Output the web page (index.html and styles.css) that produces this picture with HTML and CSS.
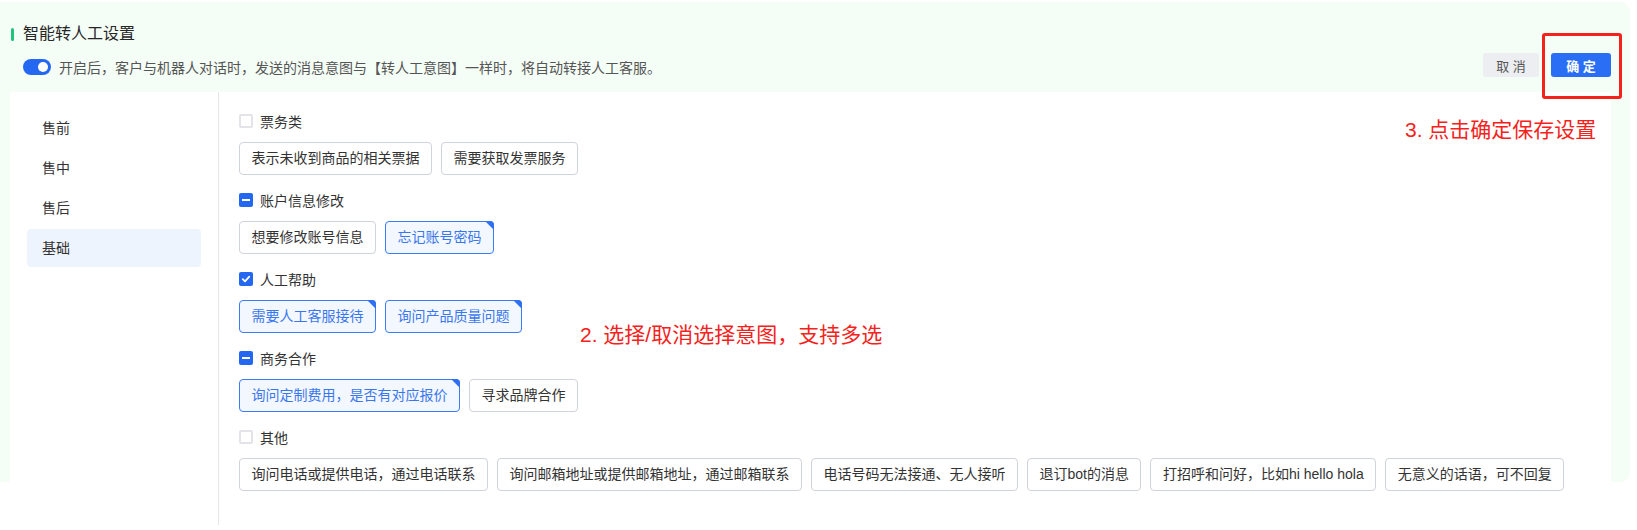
FILE: index.html
```html
<!DOCTYPE html>
<html lang="zh-CN">
<head>
    <meta charset="UTF-8">
    <title>智能转人工设置</title>
    <link rel="stylesheet" href="styles.css">
</head>
<body>
    <div class="page">
        <div class="panel">
            <div class="panel-title">智能转人工设置</div>

            <div class="panel-bar">
                <div class="switch-line">
                    <span class="switch"></span>
                    <span>开启后，客户与机器人对话时，发送的消息意图与【转人工意图】一样时，将自动转接人工客服。</span>
                </div>
                <div class="actions">
                    <button class="btn btn-cancel">取 消</button>
                    <span class="ok-wrap">
                        <button class="btn btn-ok">确 定</button>
                        <span class="mark-box"></span>
                    </span>
                </div>
            </div>

            <div class="card">
                <ul class="side-nav">
                    <li class="side-item">售前</li>
                    <li class="side-item">售中</li>
                    <li class="side-item">售后</li>
                    <li class="side-item active">基础</li>
                </ul>

                <div class="intents">
                    <div class="group">
                        <div class="check"><span class="box"></span>票务类</div>
                        <div class="tags">
                            <span class="tag">表示未收到商品的相关票据</span>
                            <span class="tag">需要获取发票服务</span>
                        </div>
                    </div>

                    <div class="group">
                        <div class="check"><span class="box half"></span>账户信息修改</div>
                        <div class="tags">
                            <span class="tag">想要修改账号信息</span>
                            <span class="tag on">忘记账号密码</span>
                        </div>
                    </div>

                    <div class="group">
                        <div class="check">
                            <span class="box full">
                                <svg width="10" height="10" viewBox="0 0 10 10"><path d="M1.8 5.2 L4 7.3 L8.3 2.6" fill="none" stroke="#fff" stroke-width="1.8" stroke-linecap="round" stroke-linejoin="round"/></svg>
                            </span>人工帮助
                        </div>
                        <div class="tags">
                            <span class="tag on">需要人工客服接待</span>
                            <span class="tag on">询问产品质量问题</span>
                        </div>
                    </div>

                    <div class="group">
                        <div class="check"><span class="box half"></span>商务合作</div>
                        <div class="tags">
                            <span class="tag on">询问定制费用，是否有对应报价</span>
                            <span class="tag">寻求品牌合作</span>
                        </div>
                    </div>

                    <div class="group">
                        <div class="check"><span class="box"></span>其他</div>
                        <div class="tags">
                            <span class="tag">询问电话或提供电话，通过电话联系</span>
                            <span class="tag">询问邮箱地址或提供邮箱地址，通过邮箱联系</span>
                            <span class="tag">电话号码无法接通、无人接听</span>
                            <span class="tag">退订bot的消息</span>
                            <span class="tag">打招呼和问好，比如hi hello hola</span>
                            <span class="tag">无意义的话语，可不回复</span>
                        </div>
                    </div>
                </div>
            </div>
        </div>

        <!-- 说明标注 -->
        <div class="note note-2">2. 选择/取消选择意图，支持多选</div>
        <div class="note note-3">3. 点击确定保存设置</div>
    </div>
</body>
</html>
```

FILE: styles.css
```css
* {
    box-sizing: border-box;
}

body {
    margin: 0;
    font-family: "Liberation Sans", "Noto Sans CJK SC", sans-serif;
    background-color: #fff;
    color: #333;
}

.page {
    position: relative;
    height: 530px;
    overflow: hidden;
}

.panel {
    margin: 2px 7px 0 0;
    height: 480px;
    padding: 0 19px 0 10px;
    background-color: #f4fdf6;
    border-radius: 0 10px 10px 0;
}

.panel-title {
    display: flex;
    align-items: center;
    padding-top: 22px;
    font-size: 16px;
    line-height: 20px;
    color: #262626;
}

.panel-title::before {
    content: "";
    width: 3px;
    height: 13px;
    margin: 0 9px 0 1px;
    background-color: #1fc47d;
    border-radius: 2px;
}

.panel-bar {
    display: flex;
    align-items: center;
    justify-content: space-between;
    height: 24px;
    margin-top: 9px;
}

.switch-line {
    display: flex;
    align-items: center;
    margin-top: 4px;
    padding-left: 13px;
    font-size: 14px;
    color: #555;
}

.switch {
    position: relative;
    width: 28px;
    height: 16px;
    margin-right: 8px;
    background-color: #2468f2;
    border-radius: 8px;
}

.switch::after {
    content: "";
    position: absolute;
    top: 3px;
    right: 3px;
    width: 10px;
    height: 10px;
    background-color: #fff;
    border-radius: 50%;
}

.actions {
    display: flex;
    gap: 12px;
}

.btn {
    height: 24px;
    padding: 0;
    border: none;
    border-radius: 3px;
    font-family: inherit;
    font-size: 13px;
    cursor: pointer;
}

.btn-cancel {
    width: 56px;
    background-color: #eceef1;
    color: #555;
}

.btn-ok {
    width: 60px;
    background-color: #2a6ef5;
    color: #fff;
    font-weight: bold;
}

.ok-wrap {
    position: relative;
    display: flex;
}

.mark-box {
    position: absolute;
    top: -20px;
    left: -9px;
    right: -11px;
    bottom: -22px;
    border: 3px solid #f5221b;
    border-radius: 3px;
}

.card {
    display: flex;
    height: 433px;
    margin-top: 15px;
    background-color: #fff;
}

.side-nav {
    width: 209px;
    margin: 0;
    padding: 17px 17px 0;
    list-style: none;
    border-right: 1px solid #e6e6e6;
}

.side-item {
    height: 38px;
    margin-bottom: 2px;
    padding-left: 15px;
    line-height: 38px;
    font-size: 14px;
    color: #333;
    border-radius: 4px;
}

.side-item.active {
    background-color: #eef4fe;
}

.intents {
    flex: 1;
    padding: 19px 0 0 20px;
}

.group {
    margin-bottom: 15px;
}

.check {
    display: flex;
    align-items: center;
    height: 20px;
    font-size: 14px;
    color: #333;
}

.box {
    display: flex;
    align-items: center;
    justify-content: center;
    width: 14px;
    height: 14px;
    margin-right: 7px;
    border: 2px solid #e3e4e9;
    border-radius: 2px;
}

.box.full,
.box.half {
    border: none;
    background-color: #2468f2;
}

.box.half::after {
    content: "";
    width: 8px;
    height: 2px;
    background-color: #fff;
}

.tags {
    display: flex;
    gap: 9px;
    margin-top: 11px;
}

.tag {
    position: relative;
    height: 33px;
    padding: 0 11.5px;
    line-height: 31px;
    font-size: 14px;
    white-space: nowrap;
    color: #333;
    background-color: #fff;
    border: 1px solid #cfd3da;
    border-radius: 4px;
}

.tag.on {
    color: #3a77ee;
    background-color: #f3f7ff;
    border-color: #3b7cf6;
}

.tag.on::after {
    content: "";
    position: absolute;
    top: -1px;
    right: -1px;
    border-style: solid;
    border-width: 0 9px 9px 0;
    border-color: transparent #2f6ff2 transparent transparent;
    border-top-right-radius: 4px;
}

.note {
    position: absolute;
    font-size: 21px;
    line-height: 24px;
    color: #f5221b;
    white-space: nowrap;
}

.note-2 {
    top: 323px;
    left: 580px;
}

.note-3 {
    top: 118px;
    left: 1405px;
}
```
